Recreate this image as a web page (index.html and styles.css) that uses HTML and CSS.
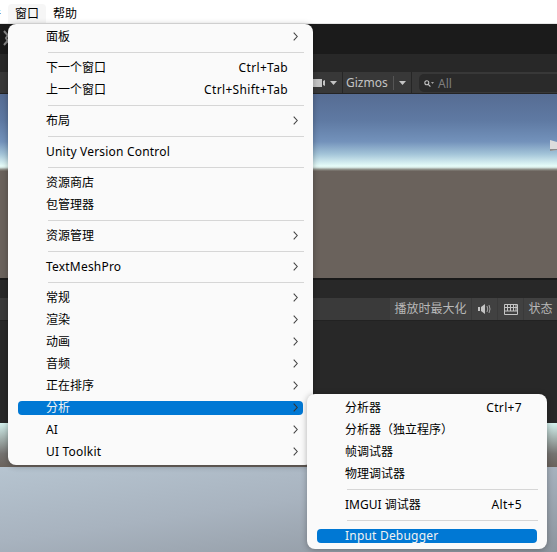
FILE: index.html
```html
<!DOCTYPE html>
<html lang="zh-CN">
<head>
    <meta charset="UTF-8">
    <meta name="viewport" content="width=device-width, initial-scale=1.0">
    <title>窗口菜单</title>
    <link rel="stylesheet" href="styles.css">
</head>
<body>
    <div class="menubar">
        <div class="menubar-item menubar-clipped">组件</div>
        <div class="menubar-item menubar-open">窗口</div>
        <div class="menubar-item">帮助</div>
    </div>

    <div class="band band-title">
        <svg class="logo" width="8" height="17" viewBox="0 0 8 17"><path d="M1 1 L7 8 L1 15 M7 2 L3 8 L7 15" fill="none" stroke="#8a8a8a" stroke-width="2"/></svg>
    </div>
    <div class="band band-tabs"></div>
    <div class="toolbar">
        <div class="tool-group tool-camera">
            <svg width="13" height="8" viewBox="0 0 13 8"><path d="M0 0 H9 V8 H0 Z M10 2 L12 1 V7 L10 6 Z" fill="#c4c4c4"/></svg>
            <svg class="caret" width="7" height="4" viewBox="0 0 7 4"><path d="M0 0 H7 L3.5 4 Z" fill="#c4c4c4"/></svg>
        </div>
        <div class="tool-group tool-gizmos">
            <span class="gizmos-label">Gizmos</span>
            <svg class="caret" width="7" height="4" viewBox="0 0 7 4"><path d="M0 0 H7 L3.5 4 Z" fill="#c4c4c4"/></svg>
        </div>
        <div class="search">
            <svg width="10" height="7" viewBox="0 0 10 7"><circle cx="2.8" cy="2.8" r="2" fill="none" stroke="#c4c4c4" stroke-width="1.1"/><path d="M4.3 4.3 L6.4 6.6" stroke="#c4c4c4" stroke-width="1.2"/><path d="M7 2 H10 L8.5 4 Z" fill="#a0a0a0"/></svg>
            <span>All</span>
        </div>
    </div>
    <div class="band band-sky">
        <svg class="scene-gizmo" width="7" height="13" viewBox="0 0 7 13"><path d="M0 1 L7 3 V11 L0 12 Z" fill="#dcdcdc"/><path d="M0 10 L7 10 V11 L0 12 Z" fill="#8a8a8a"/></svg>
    </div>
    <div class="band band-ground"></div>
    <div class="band band-line"></div>
    <div class="band band-tabs"></div>
    <div class="playbar">
        <div class="play-btn play-max">播放时最大化</div>
        <div class="play-btn play-icon">
            <svg width="13" height="10" viewBox="0 0 13 10"><path d="M0 3 H2 V7 H0 Z M3 3 L7 0 V10 L3 7 Z" fill="#c4c4c4"/><path d="M9 2 Q10.5 5 9 8 M11 1 Q13 5 11 9" fill="none" stroke="#a8a8a8"/></svg>
        </div>
        <div class="play-btn play-icon">
            <svg width="14" height="11" viewBox="0 0 14 11"><path d="M.5 .5 H13.5 V10.5 H.5 Z M.5 3.5 H13.5 M.5 7 H13.5 M3.5 .5 V7 M6.5 .5 V7 M9.5 .5 V7 M12 .5 V7" fill="none" stroke="#c4c4c4"/></svg>
        </div>
        <div class="play-btn play-stats">状态</div>
    </div>
    <div class="band band-game"></div>
    <div class="band band-sky2"></div>
    <div class="band band-floor"></div>

    <!-- main dropdown -->
    <div class="menu menu-main">
        <div class="item"><span class="label">面板</span><span class="slot"><svg width="5" height="9" viewBox="0 0 5 9"><path d="M.7 .7 L4.2 4.5 L.7 8.3" fill="none" stroke="#444" stroke-width="1.1"/></svg></span></div>
        <div class="sep"></div>
        <div class="item"><span class="label">下一个窗口</span><span class="shortcut">Ctrl+Tab</span><span class="slot"></span></div>
        <div class="item"><span class="label">上一个窗口</span><span class="shortcut">Ctrl+Shift+Tab</span><span class="slot"></span></div>
        <div class="sep"></div>
        <div class="item"><span class="label">布局</span><span class="slot"><svg width="5" height="9" viewBox="0 0 5 9"><path d="M.7 .7 L4.2 4.5 L.7 8.3" fill="none" stroke="#444" stroke-width="1.1"/></svg></span></div>
        <div class="sep"></div>
        <div class="item"><span class="label latin">Unity Version Control</span><span class="slot"></span></div>
        <div class="sep"></div>
        <div class="item"><span class="label">资源商店</span><span class="slot"></span></div>
        <div class="item"><span class="label">包管理器</span><span class="slot"></span></div>
        <div class="sep"></div>
        <div class="item"><span class="label">资源管理</span><span class="slot"><svg width="5" height="9" viewBox="0 0 5 9"><path d="M.7 .7 L4.2 4.5 L.7 8.3" fill="none" stroke="#444" stroke-width="1.1"/></svg></span></div>
        <div class="sep"></div>
        <div class="item"><span class="label latin">TextMeshPro</span><span class="slot"><svg width="5" height="9" viewBox="0 0 5 9"><path d="M.7 .7 L4.2 4.5 L.7 8.3" fill="none" stroke="#444" stroke-width="1.1"/></svg></span></div>
        <div class="sep"></div>
        <div class="item"><span class="label">常规</span><span class="slot"><svg width="5" height="9" viewBox="0 0 5 9"><path d="M.7 .7 L4.2 4.5 L.7 8.3" fill="none" stroke="#444" stroke-width="1.1"/></svg></span></div>
        <div class="item"><span class="label">渲染</span><span class="slot"><svg width="5" height="9" viewBox="0 0 5 9"><path d="M.7 .7 L4.2 4.5 L.7 8.3" fill="none" stroke="#444" stroke-width="1.1"/></svg></span></div>
        <div class="item"><span class="label">动画</span><span class="slot"><svg width="5" height="9" viewBox="0 0 5 9"><path d="M.7 .7 L4.2 4.5 L.7 8.3" fill="none" stroke="#444" stroke-width="1.1"/></svg></span></div>
        <div class="item"><span class="label">音频</span><span class="slot"><svg width="5" height="9" viewBox="0 0 5 9"><path d="M.7 .7 L4.2 4.5 L.7 8.3" fill="none" stroke="#444" stroke-width="1.1"/></svg></span></div>
        <div class="item"><span class="label">正在排序</span><span class="slot"><svg width="5" height="9" viewBox="0 0 5 9"><path d="M.7 .7 L4.2 4.5 L.7 8.3" fill="none" stroke="#444" stroke-width="1.1"/></svg></span></div>
        <div class="item active"><span class="label">分析</span><span class="slot"><svg width="5" height="9" viewBox="0 0 5 9"><path d="M.7 .7 L4.2 4.5 L.7 8.3" fill="none" stroke="#333" stroke-width="1.1"/></svg></span></div>
        <div class="item"><span class="label latin">AI</span><span class="slot"><svg width="5" height="9" viewBox="0 0 5 9"><path d="M.7 .7 L4.2 4.5 L.7 8.3" fill="none" stroke="#444" stroke-width="1.1"/></svg></span></div>
        <div class="item"><span class="label latin">UI Toolkit</span><span class="slot"><svg width="5" height="9" viewBox="0 0 5 9"><path d="M.7 .7 L4.2 4.5 L.7 8.3" fill="none" stroke="#444" stroke-width="1.1"/></svg></span></div>
    </div>

    <!-- submenu of 分析 -->
    <div class="menu menu-sub">
        <div class="item"><span class="label">分析器</span><span class="shortcut">Ctrl+7</span><span class="slot"></span></div>
        <div class="item"><span class="label">分析器（独立程序）</span><span class="slot"></span></div>
        <div class="item"><span class="label">帧调试器</span><span class="slot"></span></div>
        <div class="item"><span class="label">物理调试器</span><span class="slot"></span></div>
        <div class="sep"></div>
        <div class="item"><span class="label">IMGUI 调试器</span><span class="shortcut">Alt+5</span><span class="slot"></span></div>
        <div class="sep"></div>
        <div class="item active"><span class="label latin">Input Debugger</span><span class="slot"></span></div>
    </div>
</body>
</html>
```

FILE: styles.css
```css
* {
    box-sizing: border-box;
}

html, body {
    height: 552px;
}

body {
    margin: 0;
    width: 557px;
    overflow: hidden;
    position: relative;
    display: flex;
    flex-direction: column;
    font-family: "Noto Sans", "Noto Sans CJK SC", sans-serif;
    font-size: 12px;
    color: #000;
    background: #282828;
}

/* top menu bar */
.menubar {
    flex: 0 0 24px;
    display: flex;
    align-items: flex-end;
    background: #fff;
    border-bottom: 1px solid #e6e6e6;
    overflow: hidden;
}

.menubar-item {
    flex: 0 0 38px;
    height: 19px;
    line-height: 19px;
    text-align: center;
}

.menubar-clipped {
    margin-left: -30px;
}

.menubar-open {
    background: #f6f6f6;
    border-radius: 4px 4px 0 0;
}

/* editor behind the menus */
.band {
    position: relative;
    flex: none;
}

.band-title {
    height: 30px;
    background: #1b1b1b;
    padding: 6px 0 0 3px;
}

.logo {
    display: block;
}

.band-tabs {
    height: 18px;
    background: #282828;
}

.toolbar {
    flex: 0 0 22px;
    display: flex;
    justify-content: flex-end;
    align-items: stretch;
    background: #383838;
    border-bottom: 1px solid #242424;
}

.tool-group {
    display: flex;
    align-items: center;
    border-right: 1px solid #262626;
}

.tool-camera {
    width: 30px;
}

.tool-gizmos {
    width: 69px;
    color: #c4c4c4;
    padding-left: 3px;
}

.caret {
    margin-left: 4px;
}

.gizmos-label {
    width: 48px;
    border-right: 1px solid #555;
    line-height: 14px;
}

.tool-gizmos .caret {
    margin-left: 5px;
}

.search {
    width: 138px;
    margin: 2px 0 0 7px;
    height: 18px;
    padding-left: 5px;
    display: flex;
    align-items: center;
    gap: 4px;
    color: #7e7e7e;
    background: #2a2a2a;
    border-radius: 5px 0 0 5px;
}

.band-sky {
    height: 77px;
    background: linear-gradient(180deg, #566c93 0%, #5f7aa3 35%, #7392bb 62%, #a3c4d8 78%, #e4fbf8 93%, #dff3ef 95%, #8f918a 98%, #6e655f 100%);
}

.scene-gizmo {
    position: absolute;
    right: 0;
    top: 45px;
}

.band-ground {
    height: 107px;
    background: #6a625c;
}

.band-line {
    height: 2px;
    background: #191919;
}

.playbar {
    flex: 0 0 21px;
    display: flex;
    justify-content: flex-end;
    gap: 1px;
    background: #3a3a3a;
    border-bottom: 1px solid #222;
    line-height: 22px;
}

.play-btn {
    display: flex;
    align-items: center;
    justify-content: center;
    background: #414141;
    color: #b8b8b8;
}

.play-max {
    width: 81px;
}

.play-icon {
    width: 25px;
}

.play-stats {
    width: 33px;
}

.band-game {
    height: 102px;
    background: #282828;
}

.band-sky2 {
    height: 44px;
    background: linear-gradient(180deg, #d4f1ee 0%, #a3b1ae 35%, #757371 70%, #6a625c 100%);
}

.band-floor {
    height: 87px;
    background: linear-gradient(172deg, #b6c4d0 0%, #a8b3bf 45%, #8c949d 100%);
}

/* dropdown menus */
.menu {
    position: absolute;
    display: flex;
    flex-direction: column;
    background: #fafafa;
    border-radius: 8px;
    box-shadow: 0 1px 6px rgba(0, 0, 0, 0.3);
}

.menu-main {
    left: 8px;
    top: 24px;
    width: 305px;
    height: 441px;
    padding-top: 1px;
}

.menu-sub {
    left: 307px;
    top: 394px;
    width: 240px;
    height: 155px;
    padding-top: 2px;
}

.item {
    flex: none;
    height: 14px;
    margin: 5px 10px 3px;
    padding-left: 28px;
    display: flex;
    align-items: center;
    border-radius: 4px;
    line-height: 14px;
    white-space: nowrap;
}

.label {
    flex: 1;
}

.latin {
    letter-spacing: 0.2px;
}

.shortcut {
    letter-spacing: 0.35px;
}

.slot {
    flex: 0 0 15px;
    height: 9px;
    margin-top: -2px;
    padding-left: 5px;
    display: flex;
}

.item.active {
    background: #0078d4;
    color: #f2f2f2;
}

.sep {
    flex: none;
    height: 1px;
    margin: 5px 9px 3px 40px;
    background: #d6d6d6;
}
```
